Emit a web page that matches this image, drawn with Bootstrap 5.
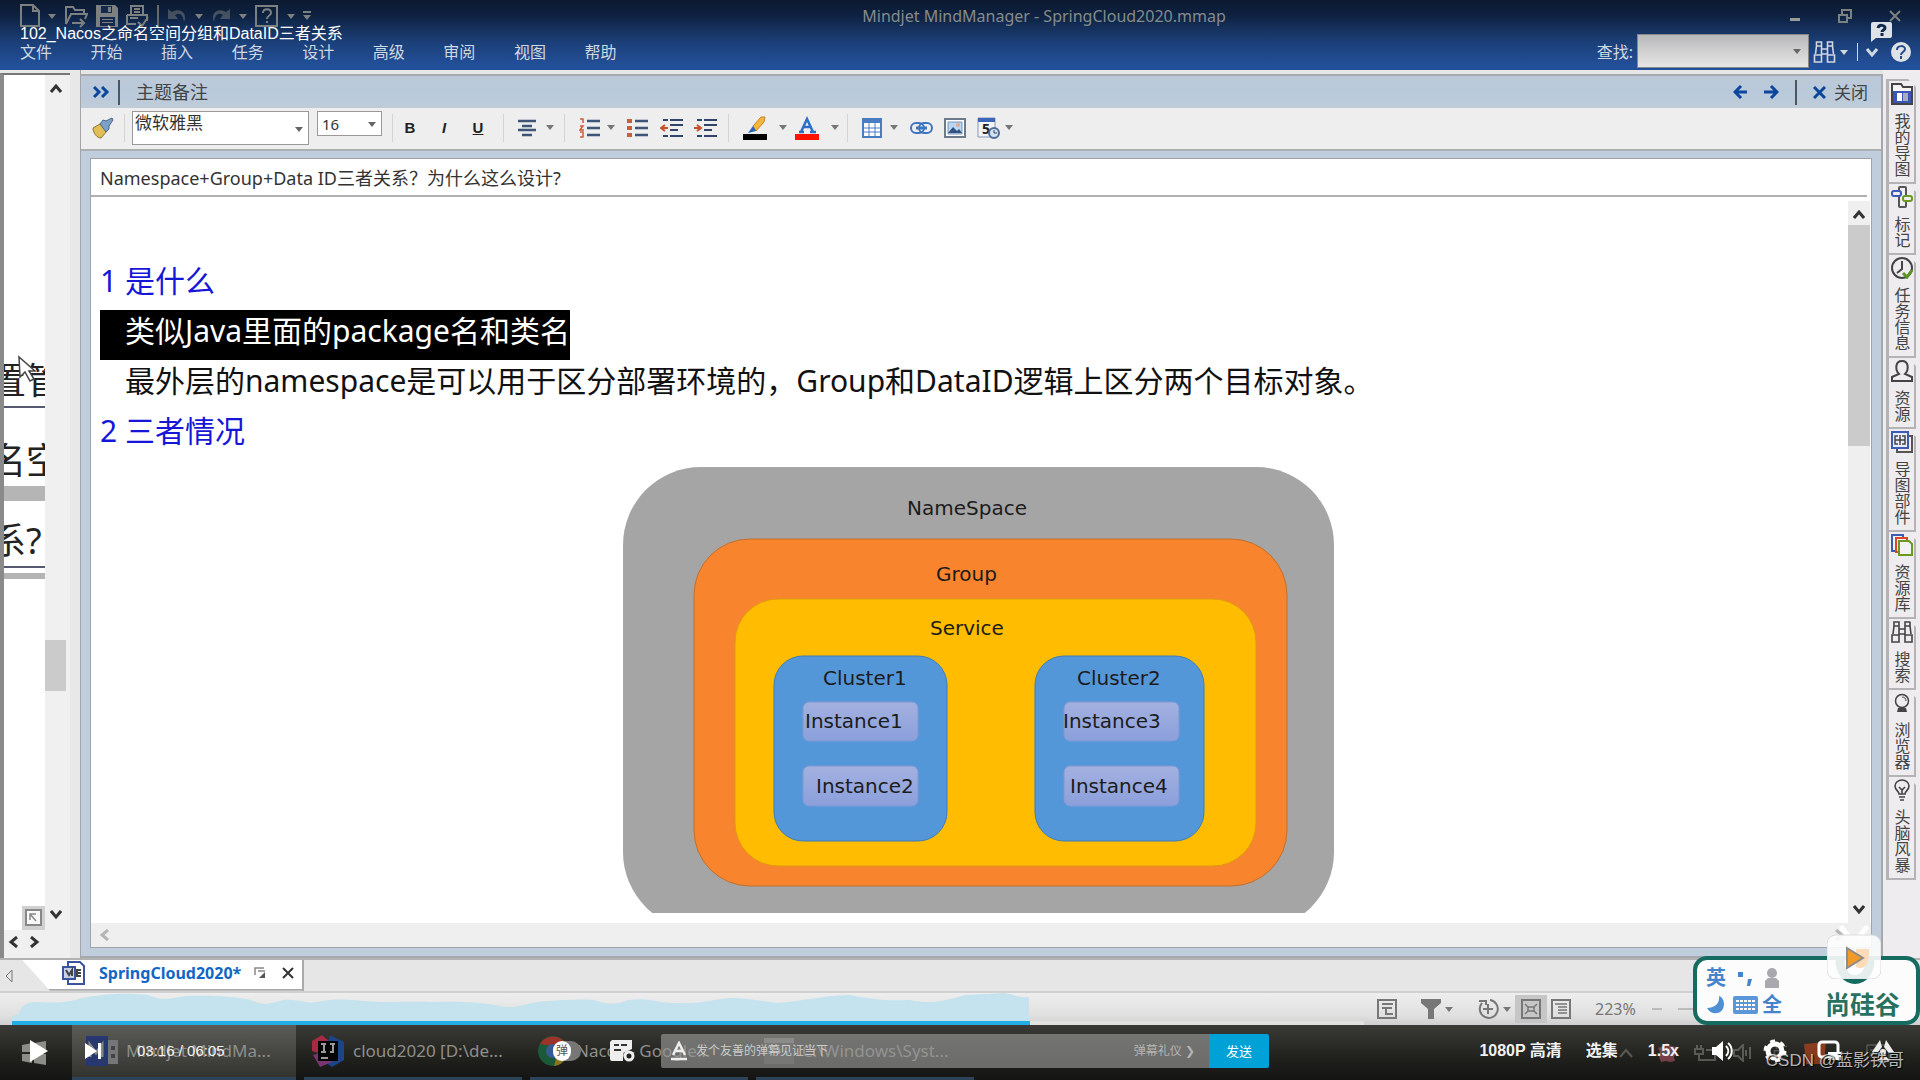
<!DOCTYPE html>
<html lang="zh-CN">
<head>
<meta charset="utf-8">
<meta name="viewport" content="width=device-width, initial-scale=1">
<title>Mindjet MindManager - SpringCloud2020.mmap</title>
<link href="https://cdn.jsdelivr.net/npm/bootstrap@5.3.0/dist/css/bootstrap.min.css" rel="stylesheet">
<style>
body{font-family:"Noto Sans","Noto Sans CJK SC",sans-serif;font-size:16px;line-height:20px;color:#333;background:#e6e6e6}
button{border:0;background:none;padding:0;color:inherit;line-height:1;display:inline-flex;align-items:center;justify-content:center}
a{color:inherit;text-decoration:none}
svg{display:block;flex-shrink:0}
.app{height:100vh;min-width:1200px}
.ln{fill:none;stroke:currentColor;stroke-width:2}
.turn-up{transform:rotate(180deg)}
.turn-left{transform:rotate(90deg)}
.turn-right{transform:rotate(-90deg)}
/* title bar and menu */
.app-head{background:linear-gradient(#0b1a30 0,#0e2140 15px,#1b3f78 42px,#23509a 66px);color:#d0d8e0}
.quick-row{height:32px;color:#7d8080}
.quick-tools{padding-left:20px;gap:8px;width:318px}
.quick-tools .vline{width:2px;height:22px;background:#66696c}
.app-title{color:#858b8b}
.win-btn{width:50px;height:32px}
.menu-row{height:38px;padding:2px 8px 0 20px}
.menu-grid{display:grid;grid-template-columns:repeat(9,1fr);width:635px}
.find-box{width:172px;height:34px;border:1px solid #888;background:linear-gradient(#b9b9bb,#e6e6e6);border-radius:0;padding:0 8px}
.find-wrap .caret{right:8px;top:15px}
.find-wrap{margin-top:-2px}
.caret{position:absolute;width:8px;color:#666}
/* left map pane */
.map-pane{width:81px;border-right:1px solid #a5a5a8;background:#e8e8e8}
.map-view{width:70px;border-left:4px solid #8a8a8a;border-top:2px solid #777;margin-top:3px;background:#f0f0f0}
.map-canvas{width:41px;background:#fff;color:#222}
.node-text{position:absolute;left:-14px;font-size:36px;line-height:40px;white-space:nowrap}
.node-line{position:absolute;left:0;width:100%;height:2px;background:#555a70}
.node-bar{position:absolute;left:0;width:100%;background:#b5b5b5}
.vbar{width:25px;background:#f0f0f0;padding:8px 4px 10px 0}
.map-hbar{height:28px;padding:0 4px 4px}
/* notes pane */
.note-pane{border:2px solid #a5a8ac;border-left:0;margin-top:4px;background:#bfcddc;min-width:0}
.note-head{height:33px;padding:0 13px 0 12px;background:linear-gradient(#bcc8d8,#b9cadb 60%,#c0cbd8);color:#444}
.note-head .vline{width:2px;height:25px;background:#4c5560}
.note-name{font-size:18px}
.note-close{font-size:17px}
.note-tools{height:40px;background:#eeeeef;padding:0 0 2px 11px;border-bottom:2px solid #adafb2;box-sizing:content-box}
.note-tools .vsep{width:1px;height:28px;background:#d4d4d6;margin:0 14px 0 2px}
.note-tools .vsep-brush{margin:0 7px 0 10px}
.tool-solo{margin-right:11px}
.tool-pair{width:44px;display:inline-flex;justify-content:space-between;padding-right:8px}
.tool-wide{width:52px}
.tool-txt{width:34px;height:28px;font:bold 15px "Liberation Sans",sans-serif;color:#222}
.pick{appearance:none;border:1px solid #999;border-radius:0;background:#fff;color:#333;line-height:20px;padding:0 2px}
.pick-font{width:177px;height:34px;padding-bottom:10px;font-size:17px}
.pick-size{width:65px;height:25px;font-size:15px;padding-left:4px}
.pick-font + .caret{right:6px;top:16px}
.pick-size + .caret{right:6px;top:11px}
.note-body{margin:7px 9px 8px;border:1px solid #a0a4a8;background:#fff;min-height:0}
.note-title{height:38px;line-height:30px;padding:4px 8px 0 9px;border-bottom:2px solid #b0b0b0;font-size:18px;margin:0 4px 0 0}
.note-text{font-size:30px;color:#111;padding:63px 0 0 9px;min-width:0}
.note-text h2{font-size:30px;line-height:42px;padding-bottom:8px;font-weight:400;color:#1616d8;margin:0}
.note-text p{margin:0;white-space:nowrap;line-height:42px}
.picked{background:#000;color:#fff;display:inline-block;vertical-align:top;padding:0 0 8px 25px}
.indent{padding:0 0 8px 25px}
.diagram{padding:7px 2px 0 12px;min-height:0;margin-bottom:10px}
.diagram svg{margin:0 auto}
.diagram text{font:20px "DejaVu Sans",sans-serif;fill:#1c1c1c}
.vscroll{width:22px;background:#efefef;margin:4px 1px 0 0}
.thumb{background:#cbcbcb}
.hscroll{height:24px;background:#efefef;padding:0 26px 0 8px;color:#b5b5b5}
/* right tabs */
.side-tabs{width:37px;padding:9px 3px 0 3px;background:#eeecee}
.side-tab{border:2px solid #b5b3b5;border-top:0;border-left-width:3px;width:30px;padding:2px 0 5px;gap:8px;clip-path:polygon(0 0,22px 0,100% 8px,100% 100%,0 100%);color:#444}
.side-tab:first-child{border-top:2px solid #b5b3b5;padding-top:2px}
.side-tab span{writing-mode:vertical-rl;font-size:16px;line-height:16px}
.tab-strip{height:36px;background:#e6e6e6;border-top:2px solid #b2b2b2;border-bottom:2px solid #d0d0d0}
.doc-tab{width:282px;height:31px;background:#fff;clip-path:polygon(0 0,100% 0,100% 100%,28px 100%);padding:0 8px 3px 40px;border-bottom:2px solid #aaa;border-right:2px solid #aaa}
.doc-tab b{color:#1266c4;width:171px;padding-left:13px}
.status{height:33px;background:linear-gradient(#eee,#e0e0e0 70%,#cfcfcf);color:#777;padding-left:1377px}
.on-btn{width:32px;height:28px;background:#c6c6c6}
/* taskbar */
.taskbar{height:56px;background:linear-gradient(#3a3a36,#20201d 60%,#141413);color:#8f8f8b;font-size:17px;padding-left:72px;gap:8px}
.win-logo{position:absolute;left:22px;top:16px}
.task{width:218px;padding:0 8px;gap:8px;border-bottom:3px solid #2c4359;white-space:nowrap;overflow:hidden}
.task-on{background:linear-gradient(#5b5b57,#33332f);width:224px;padding-left:14px}
.tray{padding-right:30px}
/* video overlay */
.vid-title{left:20px;top:24px;color:#fff;font:16px/20px "Liberation Sans","Noto Sans CJK SC",sans-serif}
.wave{left:12px;bottom:55px;width:1018px}
.seek-rest{left:1030px;bottom:55px;width:334px;height:4px;background:#e2e2e0}
.player{left:0;right:0;bottom:0;height:56px;color:#f2f2f2;font-family:"Liberation Sans","Noto Sans CJK SC",sans-serif;padding:0 25px 2px 29px}
.next-btn{margin:0 35px 0 36px}
.clock{width:416px;font-size:15px}
.dm-form{width:548px;height:34px;background:rgba(150,150,148,.66);border-radius:2px 0 0 2px;padding:0 14px 0 9px;margin-left:26px}
.dm-form input{background:none;border:0;width:160px;font-size:12px;color:#ccc;padding:0}
.dm-form input::placeholder{color:#ccc;opacity:1}
.dm-send{width:60px;height:34px;background:#00a1d6;color:#fff;font-size:13px;border-radius:0 2px 2px 0}
.small-txt{font-size:12px;color:#b5b5b2}
.toggle-dm{width:28px;height:20px;border-radius:10px;background:#777;margin-right:29px}
.toggle-dm span{width:18px;height:20px;border-radius:9px;background:#fff;color:#555;font-size:12px;line-height:20px}
.ctl-right{font-weight:700;font-size:16px;gap:30px}
.csdn{right:16px;bottom:8px;font:17px/22px "Liberation Sans","Noto Sans CJK SC",sans-serif;color:rgba(235,235,235,.75);text-shadow:1px 1px 1px #000}
.ime{right:0;bottom:55px;width:227px;height:69px;border:4px solid #156b5f;border-radius:14px;background:#fcfcfc;color:#4484cc;padding:3px 16px 0 5px}
.ime-grid{display:grid;grid-template-columns:28px 30px 24px;grid-template-rows:29px 26px;justify-items:center;align-items:center;font-weight:700;font-size:20px}
.brand{color:#28705f;font-size:25px;line-height:26px;font-weight:700;padding-top:28px}
.brand-ring{right:38px;bottom:90px}
.tv{right:39px;bottom:101px}
.help-pop{right:28px;top:22px}
.cursor{left:17px;top:355px}
</style>
</head>
<body>
<svg width="0" height="0" class="position-absolute" aria-hidden="true">
<symbol id="dn" viewBox="0 0 8 5"><path d="M0 0h8L4 5z" fill="currentColor"/></symbol>
<symbol id="bino" viewBox="0 0 22 22"><path d="M3 1h5v4H3zM14 1h5v4h-5zM3 5L2 13M8 5v8M14 5v8M19 5l1 8M1 14h7v7H1zM14 14h7v7h-7zM8 8h6v5H8z" fill="none" stroke="currentColor" stroke-width="1.6"/></symbol>
<symbol id="chev" viewBox="0 0 12 12"><path d="M1 3l5 6 5-6" fill="none" stroke="currentColor" stroke-width="3"/></symbol>
</svg>
<div class="app d-flex flex-column position-relative overflow-hidden">
<header class="app-head">
 <div class="quick-row d-flex align-items-center">
  <div class="quick-tools d-flex align-items-center">
   <button aria-label="新建"><svg width="20" height="24" class="ln"><path d="M1 1h12l6 6v15H1zM13 1v6h6"/></svg></button>
   <svg width="8" height="5"><use href="#dn"/></svg>
   <button aria-label="打开"><svg width="24" height="24" class="ln"><path d="M2 20V3h7l2 3h9v4M2 20l5-10h16l-2 5M8 19h12M16 15l4 4-4 4"/></svg></button>
   <button aria-label="保存"><svg width="22" height="24"><path d="M0 1h19l3 3v19H0z" fill="currentColor"/><path d="M5 2h11v7H5zM4 13h15v9H4z" fill="#14294b"/><path d="M12 3h3v5h-3zM6 15h11v1H6zM6 18h11v1H6z" fill="currentColor"/></svg></button>
   <button aria-label="打印"><svg width="23" height="24" class="ln"><path d="M5 10V2h12v8M8 5h6M8 8h6M1 11h20v6M1 11v9h9M4 14h8M12 18l4 4 6-9"/></svg></button>
   <span class="vline"></span>
   <button aria-label="撤销" class="opacity-50"><svg width="20" height="20"><path d="M1 3v10h10L8 9c5-3 8 0 9 7 4-9-4-15-12-10z" fill="currentColor"/></svg></button>
   <svg width="8" height="5"><use href="#dn"/></svg>
   <button aria-label="重做" class="opacity-50"><svg width="20" height="20"><path d="M19 3v10H9l3-4C7 6 4 9 3 16-1 7 7 1 15 6z" fill="currentColor"/></svg></button>
   <svg width="8" height="5"><use href="#dn"/></svg>
   <button aria-label="帮助"><svg width="24" height="24" class="ln"><path d="M1 2h21v20H1zM8 9c0-5 8-5 8 0 0 3-4 2-4 6M12 17v2"/></svg></button>
   <svg width="8" height="5"><use href="#dn"/></svg>
   <svg width="8" height="10"><path d="M0 0h8v2H0zM0 4h8l-4 5z" fill="currentColor"/></svg>
  </div>
  <div class="app-title flex-grow-1 text-center">Mindjet MindManager - SpringCloud2020.mmap</div>
  <div class="d-flex">
   <button class="win-btn" aria-label="最小化"><svg width="10" height="10"><path d="M0 7h10v3H0z" fill="#999c98"/></svg></button>
   <button class="win-btn" aria-label="还原"><svg width="14" height="14" class="ln"><path d="M1 6h8v7H1zM4 5V1h9v8h-3"/></svg></button>
   <button class="win-btn" aria-label="关闭窗口"><svg width="12" height="12" class="ln"><path d="M1 1l10 10M11 1L1 11"/></svg></button>
  </div>
 </div>
 <div class="menu-row d-flex align-items-center justify-content-between">
  <nav class="menu-grid"><a href="#">文件</a><a href="#">开始</a><a href="#">插入</a><a href="#">任务</a><a href="#">设计</a><a href="#">高级</a><a href="#">审阅</a><a href="#">视图</a><a href="#">帮助</a></nav>
  <div class="d-flex align-items-center gap-1">
   <label for="find">查找:</label>
   <div class="find-wrap position-relative"><input id="find" class="find-box d-block"><svg class="caret" height="5"><use href="#dn"/></svg></div>
   <button aria-label="查找"><svg width="23" height="22"><use href="#bino"/></svg></button>
   <svg width="8" height="5"><use href="#dn"/></svg>
   <svg width="10" height="18"><path d="M5 0h1v18H5z" fill="currentColor"/></svg>
   <button aria-label="折叠"><svg width="12" height="12"><use href="#chev"/></svg></button>
   <button class="ms-2" aria-label="帮助中心"><svg width="22" height="22"><circle cx="11" cy="11" r="10" fill="#dfe3e8"/><path d="M7 9c0-5 8-5 8-1 0 3-4 3-4 6M11 15v3" fill="none" stroke="#234a8a" stroke-width="2"/></svg></button>
  </div>
 </div>
</header>

<main class="d-flex flex-grow-1 overflow-hidden">
 <aside class="map-pane d-flex flex-shrink-0">
  <div class="map-view d-flex flex-column">
   <div class="d-flex flex-grow-1">
    <div class="map-canvas position-relative overflow-hidden">
     <div class="node-text" style="top:286px">置管</div><div class="node-line" style="top:331px"></div>
     <div class="node-text" style="top:366px">名空</div><div class="node-bar" style="top:411px;height:15px"></div>
     <div class="node-text" style="top:446px">系?</div><div class="node-line" style="top:491px"></div><div class="node-bar" style="top:498px;height:6px"></div>
     <svg class="position-absolute bottom-0 end-0" width="23" height="24"><path d="M0 0h23v24H0z" fill="#d0d0d0"/><path d="M4 4h15v15H4z" fill="#f8f8f8" stroke="#888" stroke-width="2"/><path d="M8 14V8h6M8 8l6 7" fill="none" stroke="#888" stroke-width="1.5"/></svg>
    </div>
    <div class="vbar d-flex flex-column align-items-center">
     <svg width="12" height="12" class="turn-up"><use href="#chev"/></svg>
     <div style="flex:546"></div><div class="thumb align-self-stretch" style="flex:51"></div><div style="flex:217"></div>
     <svg width="12" height="12"><use href="#chev"/></svg>
    </div>
   </div>
   <div class="map-hbar d-flex align-items-center gap-2"><svg width="12" height="12" class="turn-left"><use href="#chev"/></svg><svg width="12" height="12" class="turn-right"><use href="#chev"/></svg></div>
  </div>
 </aside>

 <section class="note-pane flex-grow-1 d-flex flex-column">
  <div class="note-head d-flex align-items-center">
   <svg width="17" height="12"><path d="M1 1l5 5-5 5M9 1l5 5-5 5" fill="none" stroke="#0c469c" stroke-width="3"/></svg>
   <span class="vline ms-2 me-3"></span><span class="note-name">主题备注</span>
   <div class="d-flex align-items-center ms-auto">
    <button aria-label="上一个"><svg width="15" height="14"><path d="M14 7H3M8 1L2 7l6 6" fill="none" stroke="#0c469c" stroke-width="3"/></svg></button>
    <button class="ms-3" aria-label="下一个"><svg width="15" height="14"><path d="M0 7h12M7 1l6 6-6 6" fill="none" stroke="#0c469c" stroke-width="3"/></svg></button>
    <span class="vline mx-3"></span>
    <button class="gap-2"><svg width="13" height="13"><path d="M1 1l11 11M12 1L1 12" stroke="#0c469c" stroke-width="3"/></svg><span class="note-close">关闭</span></button>
   </div>
  </div>
  <div class="note-tools d-flex align-items-center">
   <button aria-label="格式刷"><svg width="22" height="22"><path d="M1 11l7-4 7 7-6 7c-4 0-8-5-8-10z" fill="#e3bd55" stroke="#8a7430"/><path d="M8 7l3-4 3 1 6-3 1 2-4 6v3l-3 3z" fill="#7da0c8" stroke="#4a6688"/></svg></button>
   <span class="vsep vsep-brush"></span>
   <div class="position-relative"><select class="pick pick-font d-block" aria-label="字体"><option>微软雅黑</option></select><svg class="caret" height="5"><use href="#dn"/></svg></div>
   <div class="position-relative mx-2 pb-2"><select class="pick pick-size d-block" aria-label="字号"><option>16</option></select><svg class="caret" height="5"><use href="#dn"/></svg></div>
   <span class="vsep me-0"></span>
   <button class="tool-txt">B</button><button class="tool-txt fst-italic">I</button><button class="tool-txt text-decoration-underline">U</button>
   <span class="vsep ms-2"></span>
   <button class="tool-pair" aria-label="对齐"><svg width="20" height="18" stroke="#3f5578" stroke-width="2.5"><path d="M0 2h18M4 7h10M0 11h18M4 16h10"/></svg><svg width="8" height="5" color="#777"><use href="#dn"/></svg></button>
   <span class="vsep"></span>
   <button class="tool-pair" aria-label="编号"><svg width="22" height="20" stroke-width="2.5"><path d="M8 3h13M8 10h13M8 17h13" stroke="#3f5578"/><path d="M1 1h3v4M1 8h3l-3 4h4M1 14h3v5H1" stroke="#c8603c" stroke-width="1.5" fill="none"/></svg><svg width="8" height="5" color="#777"><use href="#dn"/></svg></button>
   <button class="tool-solo ms-1" aria-label="项目符号"><svg width="22" height="20" stroke-width="2.5"><path d="M8 3h13M8 10h13M8 17h13" stroke="#3f5578"/><path d="M0 3h5M0 10h5M0 17h5" stroke="#c8603c" stroke-width="4"/></svg></button>
   <button class="tool-solo" aria-label="减少缩进"><svg width="23" height="20" stroke="#30446a" stroke-width="2"><path d="M3 2h5M10 2h13M10 7h13M10 12h8M3 18h5M10 18h13"/><path d="M8 10H2M5 7l-4 3 4 3" stroke="#c8502c" fill="none"/></svg></button>
   <button class="tool-solo" aria-label="增加缩进"><svg width="23" height="20" stroke="#30446a" stroke-width="2"><path d="M3 2h5M10 2h13M10 7h13M10 12h8M3 18h5M10 18h13"/><path d="M0 10h6M3 7l4 3-4 3" stroke="#c8502c" fill="none"/></svg></button>
   <span class="vsep ms-0"></span>
   <button class="tool-pair tool-wide" aria-label="突出显示"><svg width="24" height="24"><path d="M0 18h24v6H0z"/><path d="M10 10L18 1h4l-1 5-8 9z" fill="#f5b53c" stroke="#c88420"/><path d="M10 10l-5 7 8-2z" fill="#2763bd"/></svg><svg width="8" height="5" color="#777"><use href="#dn"/></svg></button>
   <button class="tool-pair tool-wide" aria-label="字体颜色"><svg width="24" height="24"><path d="M0 18h24v6H0z" fill="#ff1200"/><path d="M4 16h5M15 16h6M6 16l6-13 6 13M8 11h8" fill="none" stroke="#2b6fc6" stroke-width="2.5"/></svg><svg width="8" height="5" color="#777"><use href="#dn"/></svg></button>
   <span class="vsep ms-0"></span>
   <button class="tool-pair" aria-label="表格"><svg width="20" height="20"><path d="M1 1h18v18H1z" fill="#fff" stroke="#4a7cc4" stroke-width="2"/><path d="M1 3h18" stroke="#4a7cc4" stroke-width="4"/><path d="M1 10h18M1 14h18M7 5v14M13 5v14" stroke="#4a7cc4"/></svg><svg width="8" height="5" color="#777"><use href="#dn"/></svg></button>
   <button class="tool-solo ms-1" aria-label="链接"><svg width="23" height="14" fill="none" stroke="#3d75c0" stroke-width="2"><rect x="1" y="2" width="13" height="10" rx="5"/><rect x="9" y="2" width="13" height="10" rx="5"/><path d="M6 7h11" stroke-width="3"/></svg></button>
   <button class="tool-solo" aria-label="图片"><svg width="22" height="20"><path d="M1 1h20v18H1z" fill="#fff" stroke="#6c7a8c" stroke-width="2"/><path d="M4 4h14v12H4z" fill="#b9d7f3" stroke="#7a95b5"/><path d="M4 15l5-6 4 4 2-2 3 4z" fill="#34527e"/><circle cx="14" cy="7" r="2" fill="#e0a890"/></svg></button>
   <button class="tool-pair" aria-label="日期时间"><svg width="23" height="22"><path d="M1 1h17v19H1z" fill="#f2f5fa" stroke="#8a98b0"/><path d="M1 1h17v4H1z" fill="#3d65b8"/><text x="5" y="17" font-size="14" font-weight="700" fill="#222">5</text><circle cx="17" cy="16" r="5" fill="#d3e2f2" stroke="#4c6c98" stroke-width="2"/><path d="M17 13v3h3" fill="none" stroke="#345"/></svg><svg width="8" height="5" color="#777"><use href="#dn"/></svg></button>
  </div>
  <div class="note-body flex-grow-1 d-flex flex-column overflow-hidden">
   <div class="note-title">Namespace+Group+Data ID三者关系？为什么这么设计?</div>
   <div class="d-flex flex-grow-1 overflow-hidden">
    <article class="note-text flex-grow-1 d-flex flex-column overflow-hidden">
     <h2>1 是什么</h2>
     <p><span class="picked">类似Java里面的package名和类名</span></p>
     <p class="indent">最外层的namespace是可以用于区分部署环境的，Group和DataID逻辑上区分两个目标对象。</p>
     <h2>2 三者情况</h2>
     <div class="diagram overflow-hidden flex-grow-1">
      <svg width="712" height="464" viewBox="0 0 712 464" role="img" aria-label="NameSpace Group Service">
       <defs><linearGradient id="ins" x2="0" y2="1"><stop stop-color="#a3b1e0"/><stop offset="1" stop-color="#8b9fdb"/></linearGradient></defs>
       <rect width="711" height="463" rx="78" fill="#a5a5a5"/>
       <rect x="71" y="72" width="593" height="347" rx="56" fill="#f8842d" stroke="#c0702f"/>
       <rect x="112" y="132" width="521" height="267" rx="43" fill="#ffbc00" stroke="#e09a10"/>
       <rect x="151" y="189" width="173" height="185" rx="29" fill="#5497d8" stroke="#3d7db8"/>
       <rect x="412" y="189" width="169" height="185" rx="29" fill="#5497d8" stroke="#3d7db8"/>
       <g fill="url(#ins)" stroke="#7f98d6"><rect x="180" y="235" width="115" height="39" rx="6"/><rect x="180" y="299" width="115" height="40" rx="6"/><rect x="441" y="235" width="115" height="39" rx="6"/><rect x="441" y="299" width="115" height="40" rx="6"/></g>
       <text x="284" y="48">NameSpace</text><text x="313" y="114">Group</text><text x="307" y="168">Service</text>
       <text x="200" y="218">Cluster1</text><text x="454" y="218">Cluster2</text>
       <text x="182" y="261">Instance1</text><text x="193" y="326">Instance2</text><text x="440" y="261">Instance3</text><text x="447" y="326">Instance4</text>
      </svg>
     </div>
    </article>
    <div class="vscroll d-flex flex-column align-items-center flex-shrink-0 py-1">
     <svg class="my-1 turn-up" width="12" height="12"><use href="#chev"/></svg>
     <div class="thumb align-self-stretch" style="flex:221"></div><div style="flex:457"></div>
     <svg class="mb-1" width="12" height="12"><use href="#chev"/></svg>
    </div>
   </div>
   <div class="hscroll d-flex align-items-center justify-content-between"><svg width="12" height="12" class="turn-left"><use href="#chev"/></svg><svg class="turn-right" width="12" height="12"><use href="#chev"/></svg></div>
  </div>
 </section>

 <nav class="side-tabs d-flex flex-column flex-shrink-0">
  <a href="#" class="side-tab d-flex flex-column align-items-center"><svg width="22" height="22"><path d="M1 21V1h9l2 3h9v17z" fill="#f5f5f5" stroke="#444" stroke-width="2"/><path d="M2 8h18v12H2z" fill="#3c55b4"/><path d="M6 10h5v8H6z" fill="#fff"/><path d="M12 10h5v8h-5z" fill="#aab"/></svg><span>我的导图</span></a>
  <a href="#" class="side-tab d-flex flex-column align-items-center"><svg width="22" height="22" fill="#f0f0f0" stroke-width="2"><rect x="8" y="1" width="7" height="20" rx="1" stroke="#555"/><rect x="1" y="5" width="9" height="5" rx="2" stroke="#3b5bb5"/><rect x="12" y="10" width="9" height="5" rx="2" stroke="#6b9a22"/></svg><span>标记</span></a>
  <a href="#" class="side-tab d-flex flex-column align-items-center"><svg width="22" height="22" class="ln"><circle cx="11" cy="11" r="10"/><path d="M11 4v8l-5 4"/><path d="M12 16l4 4 5-7" stroke="#5c9422" stroke-width="3"/></svg><span>任务信息</span></a>
  <a href="#" class="side-tab d-flex flex-column align-items-center"><svg width="22" height="22" class="ln"><path d="M1 21v-4l7-3C4 10 4 1 11 1s7 9 3 13l7 3v4z"/></svg><span>资源</span></a>
  <a href="#" class="side-tab d-flex flex-column align-items-center"><svg width="22" height="22" fill="none" stroke-width="2"><path d="M18 5h3v16H6v-3" stroke="#555"/><path d="M1 1h16v16H1z" fill="#e8ecf8" stroke="#3b5bb5"/><path d="M9 4v10M7 5H4v8h3M11 5h3v8h-3M4 9h10" stroke="#444" stroke-width="1.5"/></svg><span>导图部件</span></a>
  <a href="#" class="side-tab d-flex flex-column align-items-center"><svg width="22" height="22" fill="#f2f2f2" stroke-width="2"><path d="M1 1h11v16H1z" stroke="#3b5bb5"/><path d="M5 4h11v14H5z" stroke="#e0452c"/><path d="M8 7h10l3 3v11H8z" stroke="#6b9a22"/></svg><span>资源库</span></a>
  <a href="#" class="side-tab d-flex flex-column align-items-center"><svg width="22" height="22"><use href="#bino"/></svg><span>搜索</span></a>
  <a href="#" class="side-tab d-flex flex-column align-items-center"><svg width="22" height="22"><circle cx="11" cy="9" r="6.5" fill="none" stroke="currentColor" stroke-width="1.5"/><path d="M11 5c2 0 4 1 4 4" fill="none" stroke="currentColor"/><path d="M7 16h8l1 4H6z" fill="currentColor"/></svg><span>浏览器</span></a>
  <a href="#" class="side-tab d-flex flex-column align-items-center"><svg width="22" height="22" fill="none" stroke="currentColor" stroke-width="1.6"><path d="M8 15c0-3-4-4-4-8a7 6 0 0 1 14 0c0 4-4 5-4 8zM8 18h6M9 21h4M8 8l3 3 3-3M11 11v4"/></svg><span>头脑风暴</span></a>
 </nav>
</main>

<div class="tab-strip d-flex">
 <svg class="mt-2 ms-1 me-2" width="10" height="16" fill="none" stroke="#777"><path d="M8 2v12L2 8z"/></svg>
 <div class="doc-tab d-flex align-items-center">
  <svg width="24" height="24" fill="#fff" stroke="#3a539b" stroke-width="2"><path d="M6 1h12l4 4v18H6z"/><path d="M1 6h12v12H1z" fill="#c9d0ea"/><path d="M4 9l3 5 3-5v6M19 9h-4v6h4M15 12h4" fill="none" stroke="#444"/></svg>
  <b>SpringCloud2020*</b>
  <button aria-label="弹出"><svg width="12" height="12"><path d="M1 8V1h9M4 4h7" fill="none" stroke="#888" stroke-width="1.5"/><path d="M11 5v6H5z" fill="#555"/></svg></button>
  <button class="ms-3" aria-label="关闭标签"><svg width="12" height="12" class="ln"><path d="M1 1l10 10M11 1L1 11"/></svg></button>
 </div>
</div>

<div class="status d-flex align-items-center">
 <button aria-label="备注"><svg width="20" height="20" class="ln"><path d="M1 1h18v18H1zM5 5h11M5 9h4v6h7M9 9h6"/></svg></button>
 <button class="ms-4 gap-1" aria-label="筛选"><svg width="20" height="20"><path d="M0 0h20v4l-7 6v10H7V10L0 4z" fill="currentColor"/></svg><svg width="8" height="5"><use href="#dn"/></svg></button>
 <button class="ms-4 gap-1" aria-label="展开"><svg width="22" height="22"><path d="M5 5a9 9 0 1 0 8-3M11 6v10M6 11h10M2 3h7v4" fill="none" stroke="currentColor" stroke-width="2"/></svg><svg width="8" height="5"><use href="#dn"/></svg></button>
 <button class="on-btn mx-1" aria-label="导图视图"><svg width="20" height="20" class="ln"><path d="M1 1h18v18H1z"/><path d="M4 5l4 4M16 5l-4 4M4 15l4-4M16 15l-4-4M7 8h6v4H7z" stroke-width="1.5"/></svg></button>
 <button aria-label="大纲视图"><svg width="20" height="20" class="ln"><path d="M1 1h18v18H1z"/><path d="M4 5h12M7 8h9M7 11h9M7 14h9" stroke-width="1.5"/></svg></button>
 <span class="ms-4">223%</span>
 <svg class="ms-3" width="50" height="4"><path d="M0 2h10M26 2h24" stroke="#bbb" stroke-width="2"/></svg>
</div>

<footer class="taskbar d-flex position-relative">
 <svg class="win-logo" width="24" height="24" fill="#8c8c88"><path d="M0 4l10-2v9H0zM12 2l12-2v11H12zM0 13h10v9L0 20zM12 13h12v11l-12-2z"/></svg>
 <div class="task task-on d-flex align-items-center"><svg width="32" height="30"><path d="M0 0h22v30H0z" fill="#26386f"/><path d="M22 4h10v24H22z" fill="#76767a"/><path d="M4 21V9l6 8 6-8v12" fill="none" stroke="#888" stroke-width="3"/><path d="M25 10h4v4h-4zM25 18h4v4h-4z" fill="#444"/></svg>Mindjet MindMa...</div>
 <div class="task d-flex align-items-center"><svg width="33" height="32"><path d="M0 6L10 0l8 7-8 12L0 16z" fill="#a52b45"/><path d="M18 0l14 7v18l-12 7-9-6z" fill="#1d4485"/><path d="M1 20l9-3 10 10-12 5z" fill="#7a3470"/><path d="M6 6h20v20H6z" fill="#050505"/><path d="M9 9h5M12 9v8M9 17h5M18 9h5M21 9v8h-3M9 23h7" stroke="#999" fill="none" stroke-width="2"/></svg>cloud2020 [D:\de...</div>
 <div class="task d-flex align-items-center"><svg width="30" height="32"><circle cx="15" cy="16" r="15" fill="#1b5a38"/><path d="M2 9a15 15 0 0 1 26 0l-13 2z" fill="#9b3328"/><path d="M28 9a15 15 0 0 1-12 22l5-18z" fill="#8c7420"/><circle cx="15" cy="16" r="7" fill="#365a94"/></svg>Nacos - Google...</div>
 <div class="task d-flex align-items-center"><svg width="30" height="26"><path d="M0 0h30v26H0z" fill="#3b3b3a"/><path d="M0 0h30v5H0z" fill="#777"/><path d="M4 9h7M14 9l2 6" stroke="#aaa" stroke-width="2"/></svg>C:\Windows\Syst...</div>
 <div class="tray ms-auto d-flex align-items-center gap-3 opacity-50">
  <svg width="14" height="10" class="ln"><path d="M1 9l6-7 6 7"/></svg><svg class="ms-2" width="20" height="20"><path d="M10 0l4 3 5 1v5l-2 5 1 4-5 1-4-1-5 1-2-5 1-5-2-4 5-2z" fill="#c86070"/><path d="M5 10h10" stroke="#68a" stroke-width="3"/></svg><svg width="24" height="18" class="ln"><path d="M4 1v4M8 1v4M2 5h8v5H2zM6 10v6h16V6h-9"/></svg><svg width="22" height="18" class="ln"><path d="M1 6h4l5-5v16l-5-5H1zM13 6v6M17 3v12"/></svg><span>英</span><svg width="22" height="22"><path d="M0 2l22-2-2 22H2z" fill="#e8501c"/></svg><svg class="ms-4" width="24" height="18" class="ln"><path d="M1 1h22v16H1zM4 6h16M4 10h16" fill="none" stroke="#aaa"/></svg>
 </div>
</footer>

<!-- player overlay -->
<div class="vid-title position-absolute">102_Nacos之命名空间分组和DataID三者关系</div>
<svg class="help-pop position-absolute" width="21" height="20"><path d="M2 0h17a2 2 0 0 1 2 2v12a2 2 0 0 1-2 2H5l-5 4V2a2 2 0 0 1 2-2z" fill="#dde2e8"/><path d="M7 6c1-4 7-3 7 0 0 2-3 2-3 4M11 11v3" fill="none" stroke="#12294c" stroke-width="3"/></svg>
<svg class="cursor position-absolute" width="20" height="28"><path d="M2 2l1 20 5-5 5 9 4-2-5-8h6z" fill="#fff" stroke="#444" stroke-width="1.5"/></svg>
<svg class="wave position-absolute" height="32" viewBox="0 0 1018 32" preserveAspectRatio="none"><path d="M0 28V23l7-2c2-9 8-12 18-12 20 1 28 1 45-4 35-6 50-4 66-3 16 6 20 4 38 1 30-1 50 1 65 4 15 7 20 3 32 0 18-1 20 4 34 2 22-5 40-1 48-1 20 2 40 0 70 1 30-1 45 1 60 3 20 5 25 0 42-3 20-2 40-3 57-2 20 6 20 4 35 0 20-3 25 3 50 3 22 1 30-3 50-5 20 0 30 3 49 5 40-4 50-8 72-8 35 7 45 5 60 5 22 5 38 0 55-5 20-1 25-1 38-2 12 1 12 5 26 4V28z" fill="#c5e3ee"/><path d="M0 28h1018v4H0z" fill="#23ade5"/></svg>
<div class="seek-rest position-absolute"></div>
<div class="ime position-absolute d-flex justify-content-between">
 <div class="ime-grid"><span>英</span><svg width="16" height="18"><path d="M1 3h5v5H1zM11 10h4l-2 7h-3z" fill="#4484cc"/></svg><svg width="14" height="20" fill="#a8a8ae"><circle cx="7" cy="5" r="5"/><path d="M0 20v-7l3-3h8l3 3v7z"/></svg>
 <svg width="18" height="18"><path d="M12 0c1 7-4 12-12 12 4 8 17 7 17-4 0-4-2-7-5-8z" fill="#4f90d4"/></svg><svg width="25" height="18"><rect width="25" height="18" rx="2" fill="#5a96d8"/><path d="M3 5h19M3 9h19M3 13h19" stroke="#fff" stroke-width="2" stroke-dasharray="3 1"/></svg><span>全</span></div>
 <span class="brand">尚硅谷</span>
</div>
<svg class="brand-ring position-absolute" width="54" height="40"><path d="M12 10c0 26 30 26 30 0" fill="none" stroke="#156b5f" stroke-width="9"/></svg>
<svg class="tv position-absolute" width="54" height="54"><path d="M15 3l6 8M39 3l-6 8" stroke="#fff" stroke-width="5" stroke-linecap="round"/><rect y="10" width="54" height="44" rx="9" fill="#fdfdfd" fill-opacity=".9" stroke="#ddd"/><path d="M29 24v18c9 4 14-4 13-18z" fill="#fbdcb8"/><path d="M20 23l16 10-16 10z" fill="#f29a26" stroke="#8c8c8c" stroke-width="2"/></svg>
<div class="player position-absolute d-flex align-items-center">
 <button aria-label="播放"><svg width="20" height="24"><path d="M1 1l18 11L1 23z" fill="#fff"/></svg></button>
 <button class="next-btn" aria-label="下一集"><svg width="17" height="16"><path d="M0 0l12 8L0 16zM13 0h3v16h-3z" fill="#fff"/></svg></button>
 <span class="clock">03:16 / 06:05</span>
 <button class="toggle-dm justify-content-start" aria-label="弹幕开关"><span>弹</span></button>
 <button aria-label="弹幕设置"><svg width="25" height="22"><path d="M2 0h20v9l-9 4v8H2a2 2 0 0 1-2-2V2z" fill="#eee"/><path d="M4 5h5M11 5h6M4 10h7" stroke="#333" stroke-width="2"/><circle cx="19" cy="16" r="4" fill="none" stroke="#eee" stroke-width="3"/></svg></button>
 <form class="dm-form d-flex align-items-center"><svg width="18" height="20"><path d="M3 14L9 2l6 12M5 10h8M1 18h16" fill="none" stroke="#eee" stroke-width="2.5"/></svg><input class="ms-2" aria-label="弹幕" placeholder="发个友善的弹幕见证当下"><a href="#" class="small-txt ms-auto">弹幕礼仪 <span>&#10095;</span></a></form>
 <button class="dm-send">发送</button>
 <div class="ctl-right d-flex align-items-center ms-auto">
  <div class="d-flex gap-4"><button class="fw-bold">1080P 高清</button><button class="fw-bold">选集</button></div><button class="fw-bold">1.5x</button>
  <button aria-label="音量"><svg width="24" height="20"><path d="M3 6h4l7-6v20l-7-6H3z" fill="#fff"/><path d="M17 5c3 3 3 7 0 10M19 2c5 4 5 12 0 16" fill="none" stroke="#fff" stroke-width="2"/></svg></button>
  <button aria-label="设置"><svg width="24" height="24"><circle cx="12" cy="12" r="7" fill="none" stroke="#fff" stroke-width="5"/><circle cx="12" cy="12" r="10" fill="none" stroke="#fff" stroke-width="3" stroke-dasharray="5 5.47"/></svg></button>
  <button aria-label="画中画"><svg width="24" height="22"><rect x="2" y="2" width="19" height="15" rx="3" fill="none" stroke="#fff" stroke-width="3"/><path d="M11 12h13v8H11z" fill="#fff"/></svg></button>
  <button aria-label="全屏"><svg width="24" height="24" fill="#eee"><circle cx="12" cy="13" r="3"/><path d="M9 1L1 13h6l4-5zM15 1l8 12h-6l-4-5zM6 22l5-6h3l5 6-7 2z"/></svg></button>
 </div>
</div>
<div class="csdn position-absolute">CSDN @蓝影铁哥</div>
</div>
<script src="https://cdn.jsdelivr.net/npm/bootstrap@5.3.0/dist/js/bootstrap.bundle.min.js"></script>
</body>
</html>
